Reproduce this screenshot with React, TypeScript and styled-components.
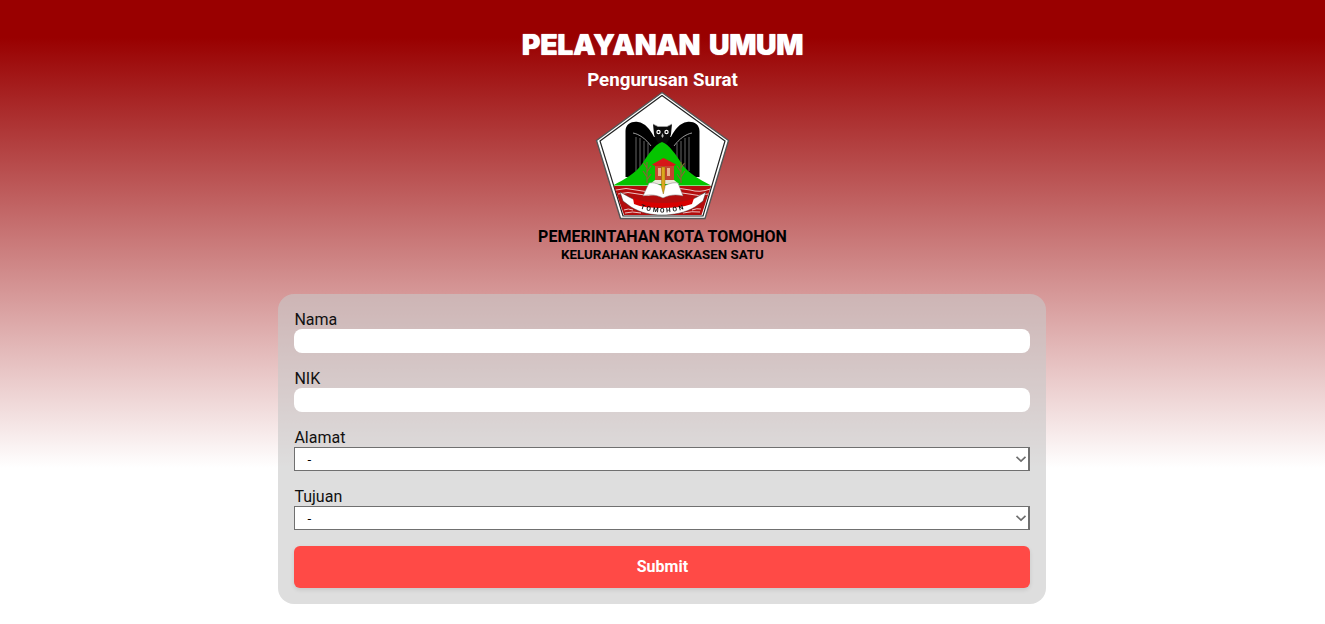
import React from "react";
import styled, { createGlobalStyle } from "styled-components";

const Global = createGlobalStyle`
  html, body { margin: 0; padding: 0; }
  body {
    min-height: 100vh;
    font-family: Roboto, "Liberation Sans", sans-serif;
    color: #000;
    background-color: #fff;
    background-image: linear-gradient(#990000 8%, #ffffff);
    background-size: 100% 468px;
    background-repeat: no-repeat;
  }
  #root { display: block; }
`;

const Page = styled.main`
  display: flex;
  flex-direction: column;
  align-items: center;
  padding-top: 28px;
`;

const Title = styled.h1`
  margin: 0;
  font-family: Inter, Roboto, sans-serif;
  font-size: 28.5px;
  line-height: 33px;
  font-weight: 900;
  letter-spacing: -0.35px;
  word-spacing: 3.5px;
  color: #fff;
  text-shadow: 0 0 1px #fff;
`;

const Subtitle = styled.h2`
  margin: 8px 0 0;
  font-size: 18.72px;
  line-height: 22px;
  font-weight: 700;
  color: #fff;
`;

const LogoSvg = styled.svg`
  display: block;
  width: 136px;
  height: 130px;
  filter: blur(0.3px);
`;

const Government = styled.div`
  margin-top: 6px;
  font-size: 16px;
  line-height: 19px;
  font-weight: 700;
`;

const Village = styled.div`
  margin-top: 1px;
  font-size: 13.33px;
  line-height: 15px;
  font-weight: 700;
`;

const Panel = styled.form`
  box-sizing: border-box;
  width: 768px;
  margin: 32px 0.2px 0 0;
  padding: 16px;
  display: flex;
  flex-direction: column;
  gap: 16px;
  border-radius: 16px;
  background: rgba(200, 200, 200, 0.6);
`;

const Field = styled.label`
  display: flex;
  flex-direction: column;
  font-size: 16px;
  line-height: 19px;
  color: #111;
`;

const TextInput = styled.input`
  box-sizing: border-box;
  height: 24px;
  width: 100%;
  border: 0;
  border-radius: 8px;
  background: #fff;
  padding: 0 8px;
`;

const SelectBox = styled.span`
  position: relative;
  display: block;
  height: 24px;
`;

const Select = styled.select`
  box-sizing: border-box;
  display: block;
  appearance: none;
  height: 24px;
  width: 100%;
  padding: 0 12px;
  border: 1px solid #707070;
  border-right-width: 2px;
  border-radius: 0;
  background: #fff;
  font-family: Roboto, "Liberation Sans", sans-serif;
  font-size: 13.33px;
  color: #000;
`;

const Chevron = styled.svg`
  position: absolute;
  right: 3px;
  top: 8px;
  width: 12px;
  height: 8px;
  pointer-events: none;
`;

const SubmitButton = styled.button`
  height: 42px;
  padding: 0 0 2px;
  border: 0;
  border-radius: 6px;
  background: #ff4a46;
  color: #fff;
  font-family: Roboto, "Liberation Sans", sans-serif;
  font-size: 16px;
  font-weight: 700;
  box-shadow: 0 2px 4px rgba(0, 0, 0, 0.1);
`;

function Logo() {
  return (
    <LogoSvg viewBox="0 0 136 130" aria-label="Lambang Kota Tomohon">
      <polygon points="67,1.5 133.5,49.5 110,127.5 25.5,127.5 1.5,49.5" fill="#fff" stroke="#555" strokeWidth="1.4" />
      <polygon points="67,4.5 130,50 108,125 28,125 5,50" fill="#fff" stroke="#222" strokeWidth="1.2" />

      {/* wings */}
      <path d="M30.5 86 L30.5 40 C30.5 33 37 30 43 31 C50 32 55 38 59 46 L76 46 C80 38 85 32 92 31 C98 30 104.5 33 104.5 40 L104.5 86 Z" fill="#000" />
      <path d="M38 42 C44 43 51 48 56 55 M97 42 C91 43 84 48 79 55" stroke="#ddd" strokeWidth="0.7" fill="none" />
      <path d="M41 46V80 M45 47V80 M49 50V80 M53 52V74 M94 46V80 M90 47V80 M86 50V80 M82 52V74" stroke="#aaa" strokeWidth="0.6" />

      {/* owl */}
      <path d="M58 33 L63 35.5 L72 35.5 L77 33 L76 43 C75 48 73 50 71 53 L64 53 C62 50 60 48 59 43 Z" fill="#0a0a0a" />
      <path d="M58 33 L63 35.5 L72 35.5 L77 33" stroke="#aaa" strokeWidth="0.7" fill="none" />
      <circle cx="63.5" cy="41" r="2.2" fill="#fff" />
      <circle cx="71.5" cy="41" r="2.2" fill="#fff" />
      <circle cx="63.5" cy="41" r="1" fill="#000" />
      <circle cx="71.5" cy="41" r="1" fill="#000" />
      <path d="M67.5 42 L66.3 45 L67.5 47 L68.7 45 Z" fill="#bbb" />

      {/* mountain */}
      <path d="M18 94.5 C30 88 41 82 47 73 C53 64 60 53 67 51 C74 53 81 64 87 73 C93 82 104 88 116 94.5 Z" fill="#05c400" />

      {/* red band */}
      <path d="M19 95 L116 95 L106.5 124 L29 124 Z" fill="#b30d0d" />
      <path d="M21 99 Q31 96 41 99 T60 99 M75 99 Q85 96 95 99 T115 98 M23 103 Q33 100 43 103 T62 103 M73 103 Q84 100 94 103 T113 103 M29 119 Q33 117 38 119 M97 119 Q102 117 106 118 M30 122 Q37 120 46 122 M88 122 Q97 120 105 121" stroke="#f4d8d8" strokeWidth="0.9" fill="none" />

      {/* ribbon */}
      <path d="M25 101 L34 106 L38 108 C48 112 58 113 67 113 C78 113 90 112 98 108 L102 106 L111 101 L108 110 L100 116 C90 122 78 124 67 124 C56 124 46 122 36 116 L28 110 Z" fill="#fff" stroke="#333" strokeWidth="0.5" />
      <path d="M38 107 C48 111 58 112 67 112 C78 112 90 111 99 107 L97 113 C88 116 78 117 67 117 C56 117 46 116 39 113 Z" fill="#d80000" />
      <defs>
        <path id="ribbon-text" d="M41 115.5 C50 120 60 121.5 67.5 121.5 C76 121.5 86 120 95 115.5" />
      </defs>
      <text fontFamily="Roboto, sans-serif" fontSize="6.5" fontWeight="700" fill="#111">
        <textPath href="#ribbon-text" startOffset="50%" textAnchor="middle" letterSpacing="2">TOMOHON</textPath>
      </text>

      {/* trees */}
      <path d="M52 92V71 M52 77l-3.5-5 M52 81l4-6 M52 86l-4-6 M52 89l4-6 M86 92V71 M86 77l3.5-5 M86 81l-4-6 M86 86l4-6 M86 89l-4-6" stroke="#8a6236" strokeWidth="1.1" fill="none" />

      {/* house */}
      <rect x="60" y="73" width="19" height="16" fill="#c2452f" />
      <path d="M57 73.5 L68.5 67 L81 73.5 L79 75 L60 75 Z" fill="#d61818" />
      <path d="M63 77h3v8h-3z M72 77h3v8h-3z" fill="#e8b18a" />
      <path d="M60 89 H79 L84 93 H55 Z" fill="#e9e9d8" />

      {/* book */}
      <path d="M48 105 L54 92 C59 91 64 93 68 96 C72 93 78 91 83 92 L88 105 C81 103 74 104 68 107 C62 104 55 103 48 105 Z" fill="#fff" stroke="#777" strokeWidth="0.5" />

      {/* pen */}
      <path d="M66.5 76 H70 V96 L68.3 103 L66.5 96 Z" fill="#dca81c" stroke="#7a5c00" strokeWidth="0.4" />
    </LogoSvg>
  );
}

function ChoiceField({ label }: { label: string }) {
  return (
    <Field>
      {label}
      <SelectBox>
        <Select defaultValue="-">
          <option>-</option>
        </Select>
        <Chevron viewBox="0 0 12 8" aria-hidden="true">
          <path d="M1.5 1.8 L6 6 L10.5 1.8" fill="none" stroke="#6e6e6e" strokeWidth="1.7" />
        </Chevron>
      </SelectBox>
    </Field>
  );
}

export default function App() {
  return (
    <>
      <Global />
      <Page>
        <Title>PELAYANAN UMUM</Title>
        <Subtitle>Pengurusan Surat</Subtitle>
        <Logo />
        <Government>PEMERINTAHAN KOTA TOMOHON</Government>
        <Village>KELURAHAN KAKASKASEN SATU</Village>
        <Panel onSubmit={(e) => e.preventDefault()}>
          <Field>
            Nama
            <TextInput type="text" />
          </Field>
          <Field>
            NIK
            <TextInput type="text" />
          </Field>
          <ChoiceField label="Alamat" />
          <ChoiceField label="Tujuan" />
          <SubmitButton type="submit">Submit</SubmitButton>
        </Panel>
      </Page>
    </>
  );
}
